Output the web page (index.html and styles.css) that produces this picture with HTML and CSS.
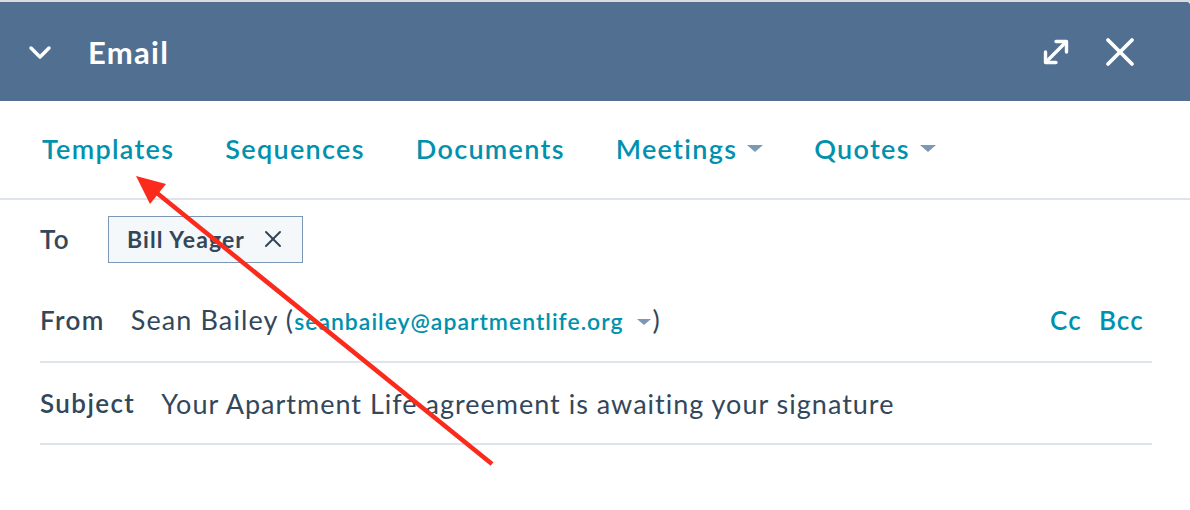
FILE: index.html
```html
<!DOCTYPE html>
<html lang="en">
<head>
    <meta charset="UTF-8">
    <meta name="viewport" content="width=device-width, initial-scale=1.0">
    <title>Email</title>
    <link rel="stylesheet" href="styles.css">
</head>
<body>

    <div class="top-strip"></div>

    <div class="panel-head">
        <svg class="head-chevron" width="24" height="16" viewBox="0 0 24 16">
            <polyline points="3,3 12,12 21,3" fill="none" stroke="#fff" stroke-width="3.5" stroke-linecap="round" stroke-linejoin="round"/>
        </svg>
        <h1 class="head-title">Email</h1>
        <div class="head-actions">
            <svg class="head-icon" width="28" height="28" viewBox="0 0 28 28">
                <g fill="none" stroke="#fff" stroke-width="3.4" stroke-linecap="round" stroke-linejoin="round">
                    <line x1="4" y1="24" x2="24" y2="4"/>
                    <polyline points="14,3.5 24.5,3.5 24.5,14"/>
                    <polyline points="3.5,14 3.5,24.5 14,24.5"/>
                </g>
            </svg>
            <svg class="head-icon" width="30" height="30" viewBox="0 0 30 30">
                <g stroke="#fff" stroke-width="3.8" stroke-linecap="round">
                    <line x1="3" y1="3" x2="27" y2="27"/>
                    <line x1="27" y1="3" x2="3" y2="27"/>
                </g>
            </svg>
        </div>
    </div>

    <div class="tools">
        <a class="tool-link">Templates</a>
        <a class="tool-link">Sequences</a>
        <a class="tool-link">Documents</a>
        <a class="tool-link">Meetings <span class="caret"></span></a>
        <a class="tool-link">Quotes <span class="caret"></span></a>
    </div>

    <div class="fields">
        <div class="field-row">
            <span class="field-label">To</span>
            <span class="chip">
                Bill Yeager
                <svg class="chip-x" width="18" height="18" viewBox="0 0 18 18">
                    <g stroke="#33475b" stroke-width="2" stroke-linecap="round">
                        <line x1="2" y1="2" x2="16" y2="16"/>
                        <line x1="16" y1="2" x2="2" y2="16"/>
                    </g>
                </svg>
            </span>
        </div>
        <div class="field-row lined">
            <span class="field-label">From</span>
            <span class="from-value">Sean Bailey (<span class="from-email">seanbailey@apartmentlife.org</span><span class="caret small"></span>)</span>
            <span class="copy-links">
                <a class="copy-link">Cc</a>
                <a class="copy-link">Bcc</a>
            </span>
        </div>
        <div class="field-row lined subject">
            <span class="field-label">Subject</span>
            <span class="subject-value">Your Apartment Life agreement is awaiting your signature</span>
        </div>
    </div>

    <!-- annotation drawn over the screenshot -->
    <svg class="annotation" width="1190" height="510" viewBox="0 0 1190 510">
        <line x1="492" y1="464" x2="152" y2="189" stroke="#fa2b1c" stroke-width="4.5"/>
        <polygon points="136,176 166,184 150,204" fill="#fa2b1c"/>
    </svg>

</body>
</html>
```

FILE: styles.css
```css
body {
    margin: 0;
    font-family: 'Lato', 'Liberation Sans', sans-serif;
    color: #33475b;
    background-color: #ffffff;
    width: 1190px;
    height: 510px;
    overflow: hidden;
    position: relative;
}
.top-strip {
    height: 2px;
    background-color: #dcdcdc;
}
.panel-head {
    height: 99px;
    background-color: #516f90;
    display: flex;
    align-items: center;
    padding: 0 55px 0 28px;
    border-top-right-radius: 3px;
}
.head-chevron {
    margin-top: 2px;
}
.head-title {
    margin: 0 0 0 36px;
    font-size: 31px;
    font-weight: 700;
    color: #ffffff;
    letter-spacing: 1.3px;
}
.head-actions {
    margin-left: auto;
    display: flex;
    align-items: center;
    gap: 35px;
}
.tools {
    height: 97px;
    display: flex;
    align-items: center;
    gap: 51px;
    padding-left: 42px;
    border-bottom: 2px solid #dfe3eb;
}
.tool-link {
    font-size: 27px;
    font-weight: 600;
    color: #0091ae;
    letter-spacing: 1.3px;
    display: flex;
    align-items: center;
    margin-top: -2px;
}
.caret {
    display: inline-block;
    width: 0;
    height: 0;
    margin-left: 10px;
    border-left: 8.5px solid transparent;
    border-right: 8.5px solid transparent;
    border-top: 7px solid #7c98b6;
}
.caret.small {
    margin: 0 2px 3px 13px;
    border-left-width: 7px;
    border-right-width: 7px;
    border-top-width: 6px;
    vertical-align: middle;
}
.fields {
    margin: 0 38px 0 40px;
}
.field-row {
    height: 78px;
    display: flex;
    align-items: center;
    gap: 26px;
}
.field-row.lined {
    border-bottom: 2px solid #dfe3eb;
    height: 83px;
}
.field-row.subject {
    height: 80px;
}
.field-label {
    font-size: 26px;
    font-weight: 600;
    letter-spacing: 1.4px;
}
.chip {
    margin-left: 12px;
    height: 45px;
    display: flex;
    align-items: center;
    gap: 19px;
    padding: 0 20px 0 18px;
    background-color: #f5f8fa;
    border: 1.5px solid #7c98b6;
    font-size: 23px;
    font-weight: 700;
    letter-spacing: 1.1px;
}
.from-value {
    font-size: 27px;
    font-weight: 400;
    letter-spacing: 1.1px;
}
.from-email {
    font-size: 23px;
    font-weight: 600;
    color: #0091ae;
    letter-spacing: 1px;
}
.copy-links {
    margin-left: auto;
    display: flex;
    gap: 17px;
    margin-right: 8px;
}
.copy-link {
    font-size: 26px;
    font-weight: 600;
    color: #0091ae;
    letter-spacing: 1.2px;
}
.subject-value {
    font-size: 27px;
    font-weight: 400;
    letter-spacing: 1px;
}
.annotation {
    position: absolute;
    left: 0;
    top: 0;
    pointer-events: none;
}
```
